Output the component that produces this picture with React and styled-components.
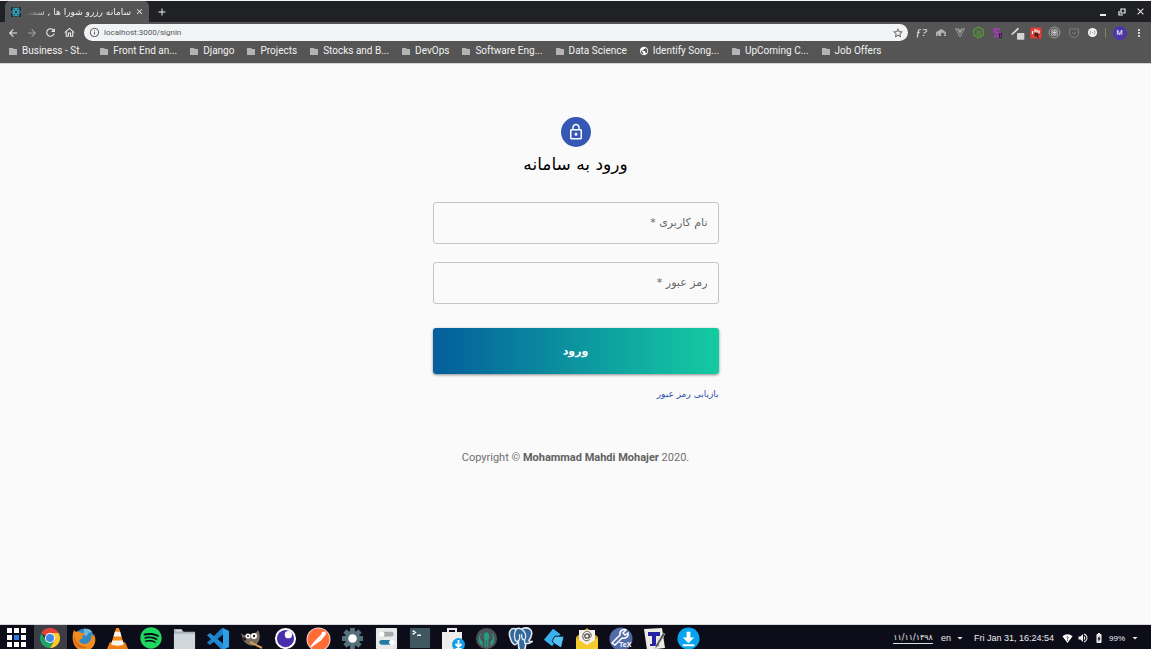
import React from "react";
import styled, { createGlobalStyle, css } from "styled-components";
import { FaReact, FaSpotify, FaVuejs } from "react-icons/fa";
import {
  MdArrowBack, MdArrowForward, MdRefresh, MdOutlineHome, MdInfoOutline, MdStarBorder,
  MdPublic, MdMoreVert, MdClose, MdAdd, MdVolumeUp, MdArrowDropDown,
  MdBatteryChargingFull,
} from "react-icons/md";

const GlobalStyle = createGlobalStyle`
  *, *::before, *::after { box-sizing: border-box; }
  body { margin: 0; background: #fafafa; font-family: Roboto, "DejaVu Sans", sans-serif; }
  button, input { font: inherit; color: inherit; border: 0; background: none; padding: 0; margin: 0; }
  svg { display: block; flex: none; }
  a { color: inherit; text-decoration: none; }
`;

const persian = css`font-family: "DejaVu Sans", sans-serif;`;

const Screen = styled.div`
  min-height: 100vh;
  display: flex;
  flex-direction: column;
`;

/* Browser chrome */
const Browser = styled.header`
  border-top: 1px solid #f4f4f4;
  background: #555555;
  color: #eeeeee;
`;
const TabStrip = styled.div`
  display: flex;
  align-items: center;
  height: 21px;
  padding: 0 1px 0 5px;
  background: #202124;
`;
const Tab = styled.div`
  display: flex;
  align-items: center;
  gap: 3px;
  width: 144px;
  height: 21px;
  padding: 0 5px;
  border-radius: 5px 5px 0 0;
  background: #555555;
`;
const TabTitle = styled.span`
  ${persian}
  flex: 1;
  min-width: 0;
  overflow: hidden;
  white-space: nowrap;
  font-size: 9px;
  line-height: 18px;
  mask-image: linear-gradient(to right, transparent, #000 24px);
`;
const IconButton = styled.button`
  display: flex;
  align-items: center;
  justify-content: center;
  width: ${(p) => p.$width || 19}px;
  height: 19px;
  flex: none;
  opacity: ${(p) => (p.$dim ? 0.5 : 1)};
`;
const WindowButtons = styled.div`
  display: flex;
  margin-left: auto;
`;
const Toolbar = styled.div`
  display: flex;
  align-items: center;
  height: 21px;
  padding: 0 3px;
`;
const Omnibox = styled.form`
  display: flex;
  align-items: center;
  flex: 1;
  min-width: 0;
  height: 17px;
  margin: 0 4px 0 5px;
  padding: 0 1px 0 5px;
  gap: 4px;
  border-radius: 9px;
  background: #f1f3f4;
  color: #55585c;
`;
const Address = styled.input`
  flex: 1;
  min-width: 0;
  height: 16px;
  font-size: 8px;
  outline: 0;
`;
const Separator = styled.i`
  width: 1px;
  height: 10px;
  margin: 0 4px 0 3px;
  background: #85806c;
`;
const Avatar = styled.span`
  display: grid;
  place-items: center;
  width: 14px;
  height: 14px;
  border-radius: 50%;
  background: #4d36a8;
  color: #ffffff;
  font-size: 7px;
`;
const Bookmarks = styled.nav`
  display: flex;
  align-items: center;
  height: 20px;
  padding: 0 8px 4px;
  gap: 12px;
  overflow: hidden;
`;
const Bookmark = styled.a`
  display: flex;
  align-items: center;
  gap: 4px;
  flex: none;
  font-size: 10px;
  line-height: 14px;
  color: #f2f2f2;
  svg { color: ${(p) => (p.$globe ? "#ffffff" : "#b4b4b4")}; }
`;

/* Sign-in page */
const Main = styled.main`
  flex: 1;
  display: flex;
  flex-direction: column;
  align-items: center;
  padding: 53px 16px 24px;
  border-top: 1px solid #d5d5d5;
  background: #fafafa;
`;
const Badge = styled.div`
  display: grid;
  place-items: center;
  width: 30px;
  height: 30px;
  border-radius: 50%;
  background: #3558b4;
`;
const Title = styled.h1`
  ${persian}
  margin: 4px 0 0;
  font-size: 17px;
  font-weight: 400;
  line-height: 26px;
  color: #000000;
`;
const Form = styled.form`
  display: flex;
  flex-direction: column;
  width: 100%;
  max-width: 286px;
  margin-top: 25px;
`;
const Field = styled.div`
  ${persian}
  display: flex;
  align-items: center;
  height: 42px;
  margin-bottom: 18px;
  padding: 0 10px 2px;
  gap: 8px;
  border: 1px solid #c6c6c6;
  border-radius: 3px;
  font-size: 11px;
  color: #666666;
  label { flex: none; }
  input { flex: 1; min-width: 0; height: 32px; outline: 0; }
`;
const Submit = styled.button`
  ${persian}
  height: 46px;
  margin-top: 6px;
  border-radius: 3px;
  background: linear-gradient(90deg, #045e9c, #14cba2);
  box-shadow: 0 1px 3px rgba(0, 0, 0, 0.45);
  color: #ffffff;
  font-size: 11px;
  font-weight: 700;
`;
const Recover = styled.a`
  ${persian}
  && { color: #3050a8; }
  align-self: flex-start;
  margin-top: 12px;
  font-size: 9px;
  line-height: 16px;
`;
const Copyright = styled.p`
  margin: 48px 0 0;
  font-size: 11px;
  line-height: 16px;
  color: #707070;
  b { font-weight: 700; color: #616161; }
`;

/* Desktop panel */
const Taskbar = styled.footer`
  display: flex;
  align-items: center;
  justify-content: space-between;
  height: 25px;
  border-top: 1px solid #d8d8dc;
  background: #0d0d19;
  color: #eeeeee;
`;
const Launchers = styled.div`
  display: grid;
  grid-template-columns: repeat(21, 1fr);
  width: 705px;
  height: 24px;
  flex: none;
`;
const Launcher = styled.button`
  display: grid;
  place-items: center;
  height: 24px;
  padding-top: 2px;
  overflow: hidden;
  background: ${(p) => (p.$active ? "#3d3d46" : "none")};
`;
const Tray = styled.div`
  display: flex;
  align-items: center;
  gap: 8px;
  padding: 2px 10px 0 0;
  font-size: 9px;
  font-family: "Liberation Sans", sans-serif;
  white-space: nowrap;
`;
const JalaliDate = styled.span`
  ${persian}
  font-size: 8px;
  line-height: 11px;
  border-bottom: 1px solid #dddddd;
`;
const TrayMenu = styled.button`
  display: flex;
  align-items: center;
  gap: 3px;
`;
const TrayIcons = styled.div`
  display: flex;
  align-items: center;
  gap: 4px;
`;
const Charge = styled.span`font-size: 8px;`;

const S = ({ size = 24, box = 24, children }) => (
  <svg width={size} height={size} viewBox={`0 0 ${box} ${box}`} fill="none" aria-hidden="true">{children}</svg>
);

const extensions = [
  ["Font finder", <S size={13}><text x="1" y="19" fontSize="21" fontStyle="italic" fontFamily="Liberation Serif, serif" fill="#f4f4f4">ƒ?</text></S>],
  ["Cloud", <S size={12}><path d="M2 18v-5a5 5 0 015-5 6 6 0 0111 0 5 5 0 014 5v5h-4v-4a3 3 0 00-6 0v4z" fill="#b5b5b5" /><path d="M6 18v-4m8 4a3 3 0 016-2" stroke="#666" strokeWidth="2" /></S>],
  ["Vue devtools", <FaVuejs size={12} color="#a5a5a5" />],
  ["Node", <S size={13}><path d="M12 2l9 5v10l-9 5-9-5V7z" stroke="#55963d" strokeWidth="2.5" /><path d="M10 7v8c0 2-3 2-3 0m10-4c-1-2-5-1-4 1s4 0 4 3-5 2-5 0" stroke="#55963d" strokeWidth="2" /></S>],
  ["Sass", <S size={12}><path d="M15 4H8a3 3 0 000 7h4a3 3 0 010 7H4" stroke="#a33ab4" strokeWidth="4.5" /><path d="M14 12h6v10h-6z" fill="#292036" /><path d="M17 13v6h3" stroke="#a33ab4" strokeWidth="1.5" /></S>],
  ["Color picker", <S size={16}><path d="M3 14L13 4l2 2L5 15z" fill="#ddd" /><rect x="12" y="12" width="11" height="10" rx="1" fill="#d4d4d4" /></S>],
  ["Blocker", <S size={12}><path d="M1 1h22v22H1z" fill="#e53c35" /><path d="M5 14V8m5 5V4m4 7V5m4 8V7" stroke="#fff" strokeWidth="2.5" /><path d="M9 10l11 5-5 1 3 5-3 1-3-5-3 3z" fill="#3c2020" /></S>],
  ["Atom", <S size={13}><circle cx="12" cy="12" r="10" stroke="#b0b0b0" strokeWidth="1.5" /><circle cx="12" cy="12" r="2.5" fill="#ddd" /><ellipse cx="12" cy="12" rx="7" ry="4" stroke="#bbb" strokeWidth="1.5" transform="rotate(45 12 12)" /><ellipse cx="12" cy="12" rx="7" ry="4" stroke="#bbb" strokeWidth="1.5" transform="rotate(-45 12 12)" /></S>],
  ["Pocket", <S size={12}><path d="M3 4h18v8a9 9 0 01-18 0z" stroke="#7d7d7d" strokeWidth="2" /><path d="M8 10l4 4 4-4" stroke="#7d7d7d" strokeWidth="2" /></S>],
  ["JSON", <S size={11}><circle cx="12" cy="12" r="10" fill="#f3f3f3" /><path d="M9 8c-3 0-1 4-3 4 2 0 0 4 3 4m6-8c3 0 1 4 3 4-2 0 0 4-3 4m-4-4h2" stroke="#777" strokeWidth="1.5" /></S>],
];

const bookmarks = [
  "Business - St...", "Front End an...", "Django", "Projects", "Stocks and B...", "DevOps",
  "Software Eng...", "Data Science", "Identify Song...", "UpComing C...", "Job Offers",
];

const launchers = [
  ["Applications", <S size={20} box={20}>{[0, 7, 14].map((y) => [0, 7, 14].map((x) => <rect key={x + "-" + y} x={x} y={y} width="5" height="5" fill={x === 7 && y === 7 ? "#2d7bea" : "#fff"} />))}</S>],
  ["Chrome", <S size={22}><path d="M12 12L2.5 6.5A11 11 0 0121.5 6.5H12z" fill="#e54335" /><path d="M12 12l4.8 2.8L12 23A11 11 0 012.5 6.5L7.3 14.7z" fill="#20a366" /><path d="M12 6.5h9.5A11 11 0 0112 23l4.8-8.2z" fill="#fbc92d" /><circle cx="12" cy="12" r="5.5" fill="#fff" /><circle cx="12" cy="12" r="4.4" fill="#4285e8" /></S>],
  ["Firefox", <S size={24}><circle cx="12.5" cy="11.5" r="10" fill="#3188c5" /><path d="M12 2c3-1 7 0 8 3l-4 1-1 3-3-1z" fill="#72b5d7" /><path d="M2 3l2 2c2-1 4 0 5 1 2 0 3 0 4 1l-3 2 1 2-4 2c1 4 6 5 9 3 3-2 4-5 3-9l3 3V7c4 8-1 17-10 17C3 24-2 14 2 3z" fill="#f28c1d" /><path d="M2 8c2 7 5 12 13 12-5 4-14 0-13-12z" fill="#d86919" /></S>],
  ["VLC", <S size={23}><path d="M4 16h16l3 7H1z" fill="#ee7d16" /><path d="M10.5 1h3l5.5 18c-3 2-11 2-14 0z" fill="#f58a17" /><path d="M9.2 5h5.6l1.4 5H7.8zM6.5 14h11l1 4c-3 2-10 2-13 0z" fill="#f5f5ed" /></S>],
  ["Spotify", <FaSpotify size={22} color="#1ed760" />],
  ["Files", <S size={23}><path d="M1 4V2h8l2 3h12v18H1z" fill="#aab3ba" /><path d="M1 7h22v16H1z" fill="#cfd6dc" /><path d="M3 4h6" stroke="#eee" /></S>],
  ["Visual Studio Code", <S size={24}><path d="M17 1l6 3v16l-6 3z" fill="#2c9fe6" /><path d="M17 1v6.5L4 18l-3-2.2L14 3z" fill="#1c7fc4" /><path d="M17 23v-6.5L4 6 1 8.2 14 21z" fill="#2089d2" /><path d="M14 3l3-2v6.5zM14 21l3 2v-6.5z" fill="#2089d2" /></S>],
  ["GIMP", <S size={24}><path d="M1 6c3 3 5 3 8 2 4-3 6 0 9-5 3 5 2 13-3 15-4 2-9-1-12-5z" fill="#776e61" /><circle cx="8" cy="9" r="2.6" fill="#fff" /><circle cx="14" cy="9" r="3" fill="#fff" /><circle cx="8" cy="9" r="1" fill="#222" /><circle cx="14" cy="9" r="1.2" fill="#222" /><path d="M10 15l12 6" stroke="#db9b50" strokeWidth="2" /><ellipse cx="4" cy="12" rx="2.5" ry="1.8" fill="#252526" /></S>],
  ["Insomnia", <S size={23}><circle cx="12" cy="12" r="11" fill="#fff" /><circle cx="12" cy="12" r="9" fill="#4930aa" /><circle cx="15" cy="8" r="3.8" fill="#fff" /></S>],
  ["Postman", <S size={25}><circle cx="12" cy="12" r="11.5" fill="#f7d5c4" /><circle cx="12" cy="12" r="10.5" fill="#ff6c37" /><path d="M5 19l4-5 7-7M7 17l7-5 3-4" stroke="#fff" strokeWidth="1.8" /><circle cx="17" cy="6.5" r="2.2" fill="#fff" /></S>],
  ["Settings", <S size={23}><circle cx="12" cy="12" r="8" fill="#54717c" /><path d="M12 1v22M1 12h22M4.2 4.2l15.6 15.6M19.8 4.2L4.2 19.8" stroke="#54717c" strokeWidth="5" /><circle cx="12" cy="12" r="4.5" fill="#fff" /></S>],
  ["Tweaks", <S size={23}><rect x="1" y="1" width="22" height="22" rx="1" fill="#e7e8e8" /><path d="M7 7.5h10" stroke="#a7a9aa" strokeWidth="5" strokeLinecap="round" /><path d="M7 16h10" stroke="#247ba0" strokeWidth="5" strokeLinecap="round" /><circle cx="7" cy="7.5" r="2.8" fill="#fff" /><circle cx="17.5" cy="16" r="2.8" fill="#fff" /></S>],
  ["Terminal", <S size={22}><rect x="1" y="1" width="22" height="22" rx="1" fill="#405761" /><path d="M4 4l3 2-3 2m5 1h4" stroke="#fff" strokeWidth="1.5" /></S>],
  ["Software", <S size={24}><path d="M7 5V2h8v3" stroke="#e5e5e5" strokeWidth="2" /><path d="M1 5h20v18H1z" fill="#ededeb" /><circle cx="17.5" cy="17.5" r="6.5" fill="#119fe8" /><path d="M17.5 13v6m-3-2l3 3 3-3m-6 5h6" stroke="#fff" strokeWidth="1.8" /></S>],
  ["GitKraken", <S size={23}><circle cx="12" cy="12" r="11" fill="#4b5155" /><path d="M8 20C2 17 3 8 7 6c-3 5-1 8 1 9zM16 20c6-3 5-12 1-14 3 5 1 8-1 9z" fill="#269b83" /><path d="M9 10c0-6 6-6 6 0l-1 4v7h-4v-7z" fill="#269b83" /><path d="M12 14v7" stroke="#4b5155" /></S>],
  ["PostgreSQL", <S size={25}><path d="M8 2C3 0 0 4 2 10c1 4 3 7 5 7 1 0 2-2 3-3 0 5 0 9 3 9s4-2 4-7c3 0 5-1 6-2-2 0-3 0-3-1 3-4 4-9 1-11-3-2-6-1-8 0-2-1-4-1-5 0z" fill="#32689b" stroke="#e3eaf1" strokeWidth="1.5" /><path d="M8 2c-2 3-2 8-1 11 3 2 5-1 4-6M13 2c4 3 5 7 3 10-2 1-3-1-3-5m3 5v4" stroke="#e3eaf1" strokeWidth="1.3" /></S>],
  ["Kite", <S size={22}><path d="M11 2l8 6-9 13-9-7z" fill="#37b2ee" /><path d="M13 10h10l-3 13-8-5-2-3z" fill="#55c0f4" stroke="#0d0d19" strokeWidth="1" /></S>],
  ["Mail", <S size={24}><path d="M1 10L12 1l11 9v14H1z" fill="#d2a51f" /><path d="M4 3h16v15H4z" fill="#f5f2e9" /><path d="M1 11l11 7 11-7v12H1z" fill="#f6c92c" /><circle cx="12" cy="9" r="2.2" stroke="#555" strokeWidth="1.3" /><path d="M14.3 7v3.4c2 1 3-3 .5-5-5-4-10 4-5 8 2 1 4 0 5-1" stroke="#555" strokeWidth="1" /></S>],
  ["TeX tools", <S size={24}><circle cx="12" cy="12" r="11.5" fill="#536ba7" /><path d="M3 16l8-8c-1-5 4-6 6-5l-3 3 2 2 3-2c1 4-3 6-6 5l-7 7z" stroke="#fff" strokeWidth="1.5" /><text x="10" y="20" fontSize="7" fontWeight="700" fontFamily="Liberation Sans, sans-serif" fill="#fff">TeX</text></S>],
  ["Text editor", <S size={24}><path d="M1 2l18-1 3 20-18 2z" fill="#ecebe1" /><path d="M5 5h12v4h-4v8h3v2H7v-2h2V9H5z" fill="#2422a5" /><path d="M22 7l-8 13-2 2 1-4L20 6z" fill="#444" stroke="#ccc" strokeWidth=".6" /></S>],
  ["Downloads", <S size={23}><circle cx="12" cy="12" r="11.5" fill="#08a4ef" /><path d="M10 5h4v6h4l-6 6-6-6h4zM6 18h12v2H6z" fill="#fff" /></S>],
];

export default function App() {
  return (
    <Screen>
      <GlobalStyle />
      <Browser>
        <TabStrip>
          <Tab>
            <S size={12}><path d="M2 2h20v20H2z" fill="#22303a" /><g stroke="#32b6d2" strokeWidth="1.8"><ellipse cx="12" cy="12" rx="9" ry="3.5" /><ellipse cx="12" cy="12" rx="9" ry="3.5" transform="rotate(60 12 12)" /><ellipse cx="12" cy="12" rx="9" ry="3.5" transform="rotate(120 12 12)" /></g></S>
            <TabTitle dir="rtl">سامانه رزرو شورا ها , سمپ</TabTitle>
            <IconButton $width={10} aria-label="Close tab"><MdClose size={9} /></IconButton>
          </Tab>
          <IconButton $width={26} aria-label="New tab"><MdAdd size={12} /></IconButton>
          <WindowButtons>
            <IconButton aria-label="Minimize"><S size={8} box={8}><path d="M1 7h6" stroke="#eee" strokeWidth="2" /></S></IconButton>
            <IconButton aria-label="Restore"><S size={8} box={8}><path d="M3 1h4v4H3zM1 3v4h4" stroke="#eee" strokeWidth="1.2" /></S></IconButton>
            <IconButton aria-label="Close window"><MdClose size={11} /></IconButton>
          </WindowButtons>
        </TabStrip>
        <Toolbar>
          <IconButton aria-label="Back"><MdArrowBack size={12} /></IconButton>
          <IconButton aria-label="Forward" $dim><MdArrowForward size={12} /></IconButton>
          <IconButton aria-label="Reload"><MdRefresh size={13} /></IconButton>
          <IconButton aria-label="Home"><MdOutlineHome size={13} /></IconButton>
          <Omnibox>
            <MdInfoOutline size={11} />
            <Address aria-label="Address" defaultValue="localhost:3000/signin" />
            <IconButton type="button" aria-label="Bookmark this page"><MdStarBorder size={12} /></IconButton>
          </Omnibox>
          {extensions.map(([name, icon]) => <IconButton key={name} aria-label={name}>{icon}</IconButton>)}
          <Separator />
          <IconButton aria-label="Profile"><Avatar>M</Avatar></IconButton>
          <IconButton aria-label="Menu"><MdMoreVert size={12} /></IconButton>
        </Toolbar>
        <Bookmarks>
          {bookmarks.map((name) => {
            const globe = name.startsWith("Identify");
            return (
              <Bookmark key={name} href="#" $globe={globe}>
                {globe ? <MdPublic size={10} /> : <S size={10} box={10}><path d="M1 2h4l1 1h3v6H1z" fill="currentColor" /></S>}
                {name}
              </Bookmark>
            );
          })}
        </Bookmarks>
      </Browser>
      <Main dir="rtl" lang="fa">
        <Badge>
          <S size={18}><path fill="#fff" d="M12 17c1.1 0 2-.9 2-2s-.9-2-2-2-2 .9-2 2 .9 2 2 2zm6-9h-1V6c0-2.76-2.24-5-5-5S7 3.24 7 6v2H6c-1.1 0-2 .9-2 2v10c0 1.1.9 2 2 2h12c1.1 0 2-.9 2-2V10c0-1.1-.9-2-2-2zM8.9 6c0-1.71 1.39-3.1 3.1-3.1s3.1 1.39 3.1 3.1v2H8.9V6zM18 20H6V10h12v10z" /></S>
        </Badge>
        <Title>ورود به سامانه</Title>
        <Form>
          <Field><label htmlFor="username">نام کاربری *</label><input id="username" /></Field>
          <Field><label htmlFor="password">رمز عبور *</label><input id="password" type="password" /></Field>
          <Submit type="button">ورود</Submit>
          <Recover href="#">بازیابی رمز عبور</Recover>
        </Form>
        <Copyright dir="ltr" lang="en">Copyright © <b>Mohammad Mahdi Mohajer</b> 2020.</Copyright>
      </Main>
      <Taskbar>
        <Launchers>
          {launchers.map(([name, icon]) => <Launcher key={name} aria-label={name} $active={name === "Chrome"}>{icon}</Launcher>)}
        </Launchers>
        <Tray>
          <JalaliDate>۱۱/۱۱/۱۳۹۸</JalaliDate>
          <TrayMenu>en <MdArrowDropDown size={12} /></TrayMenu>
          <span>Fri Jan 31, 16:24:54</span>
          <TrayIcons>
            <S size={11}><path d="M1 7c7-6 15-6 22 0L12 22z" fill="#fff" /><path d="M10 9c3-2 5 1 2 3v2m0 1v2" stroke="#333" strokeWidth="2" /></S>
            <MdVolumeUp size={12} />
            <MdBatteryChargingFull size={12} />
            <Charge>99%</Charge>
            <MdArrowDropDown size={12} />
          </TrayIcons>
        </Tray>
      </Taskbar>
    </Screen>
  );
}
